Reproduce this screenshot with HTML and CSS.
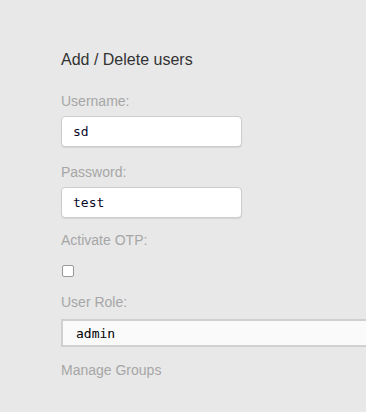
FILE: index.html
```html
<!DOCTYPE html>
<html>
<head>
<meta charset="utf-8">
<link rel="stylesheet" href="styles.css">
</head>
<body>
<div class="panel">
  <h3 class="title">Add / Delete users</h3>
  <form class="form">
    <label class="label">Username:</label>
    <input class="field" type="text" value="sd">
    <label class="label">Password:</label>
    <input class="field" type="text" value="test">
    <label class="label label-otp">Activate OTP:</label>
    <input class="check" type="checkbox">
    <label class="label label-role">User Role:</label>
    <div class="select">admin</div>
    <div class="label label-groups">Manage Groups</div>
  </form>
</div>
</body>
</html>
```
FILE: styles.css
```css
html, body {
  margin: 0;
  padding: 0;
  background: #e8e8e8;
  height: 100%;
  overflow: hidden;
}
.panel {
  padding: 50px 0 0 61px;
  font-family: "Liberation Sans", Arial, sans-serif;
  overflow: hidden;
}
.title {
  margin: 0;
  font-size: 16px;
  line-height: 20px;
  font-weight: normal;
  color: #333;
}
.form {
  display: flex;
  flex-direction: column;
  align-items: flex-start;
  margin-top: 21px;
}
.label {
  display: block;
  font-size: 14px;
  line-height: 20px;
  color: #a6a6a6;
}
.field {
  box-sizing: border-box;
  margin: 5px 0 15px 0;
  width: 181px;
  height: 31px;
  padding: 0 11px;
  border: 1px solid #ccc;
  border-radius: 4px;
  box-shadow: 0 1px 1px rgba(0,0,0,0.08);
  background: #fff;
  font-family: "DejaVu Sans Mono", monospace;
  font-size: 13px;
  color: #0a0a2a;
  outline: none;
}
.label-otp { margin-top: -3px; }
.check {
  appearance: none;
  -webkit-appearance: none;
  box-sizing: border-box;
  width: 12px;
  height: 12px;
  margin: 15px 0 15px 1px;
  border: 1px solid #999;
  border-radius: 2px;
  background: #fff;
}
.select {
  align-self: stretch;
  box-sizing: border-box;
  margin: 7px 0 13px 0;
  height: 28px;
  padding: 0 0 0 13px;
  line-height: 26px;
  border: 1px solid #d0d0d0;
  border-width: 2px 0 2px 2px;
  background: #fafafa;
  font-family: "DejaVu Sans Mono", monospace;
  font-size: 13px;
  color: #000;
}
```
